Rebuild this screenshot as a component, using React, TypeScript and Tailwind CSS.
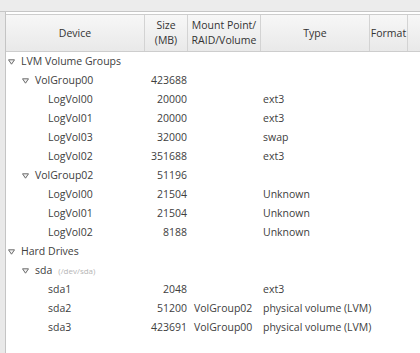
import React from "react";

type Row = {
  name: string;
  level: 0 | 1 | 2;
  expander?: boolean;
  hint?: string;
  size?: string;
  mount?: string;
  type?: string;
};

const rows: Row[] = [
  { name: "LVM Volume Groups", level: 0, expander: true },
  { name: "VolGroup00", level: 1, expander: true, size: "423688" },
  { name: "LogVol00", level: 2, size: "20000", type: "ext3" },
  { name: "LogVol01", level: 2, size: "20000", type: "ext3" },
  { name: "LogVol03", level: 2, size: "32000", type: "swap" },
  { name: "LogVol02", level: 2, size: "351688", type: "ext3" },
  { name: "VolGroup02", level: 1, expander: true, size: "51196" },
  { name: "LogVol00", level: 2, size: "21504", type: "Unknown" },
  { name: "LogVol01", level: 2, size: "21504", type: "Unknown" },
  { name: "LogVol02", level: 2, size: "8188", type: "Unknown" },
  { name: "Hard Drives", level: 0, expander: true },
  { name: "sda", level: 1, expander: true, hint: "(/dev/sda)" },
  { name: "sda1", level: 2, size: "2048", type: "ext3" },
  { name: "sda2", level: 2, size: "51200", mount: "VolGroup02", type: "physical volume (LVM)" },
  { name: "sda3", level: 2, size: "423691", mount: "VolGroup00", type: "physical volume (LVM)" },
];

const cols = "grid grid-cols-[139px_43px_73px_109px_38px_12px]";

function Expander() {
  return (
    <svg width="7" height="6" viewBox="0 0 7 6" className="shrink-0">
      <path d="M0.5 0.8 H6.5 L3.5 5.2 Z" fill="#f2f2f2" stroke="#6b6b6b" strokeWidth="1" strokeLinejoin="round" />
    </svg>
  );
}

function HeaderCell({ children, last }: { children?: React.ReactNode; last?: boolean }) {
  return (
    <div
      className={`flex items-center justify-center text-center leading-[15px] ${
        last ? "" : "border-r border-[#d3d3d3]"
      }`}
    >
      {children}
    </div>
  );
}

export default function App() {
  return (
    <div
      className="flex h-[353px] w-[420px] flex-col overflow-hidden bg-white text-[10.5px] text-[#404040]"
      style={{ fontFamily: '"Open Sans", "DejaVu Sans", sans-serif' }}
    >
      <div className="h-[12px] shrink-0 border-b border-[#c6c6c6] bg-[#ececec]" />
      <div className="flex min-h-0 flex-1">
        <div className="w-[6px] shrink-0 border-r border-[#c4c4c4] bg-[#e9e9e9]" />
        <div className="min-w-0 flex-1 pt-[2px]">
          <div
            className={`${cols} h-[38px] border-y border-[#cdcdcd] bg-gradient-to-b from-[#f7f7f7] to-[#e9e9e9] text-[#333]`}
          >
            <HeaderCell>Device</HeaderCell>
            <HeaderCell>
              Size
              <br />
              (MB)
            </HeaderCell>
            <HeaderCell>
              Mount Point/
              <br />
              RAID/Volume
            </HeaderCell>
            <HeaderCell>Type</HeaderCell>
            <HeaderCell>Format</HeaderCell>
            <HeaderCell last />
          </div>

          <div className="flex flex-col">
            {rows.map((r, i) => (
              <div key={i} className={`${cols} h-[19px] items-center`}>
                <div
                  className={`flex items-center gap-[6px] whitespace-nowrap ${
                    r.level === 0 ? "pl-[2px]" : r.level === 1 ? "pl-[16px]" : "pl-[42px]"
                  }`}
                >
                  {r.expander && <Expander />}
                  <span>{r.name}</span>
                  {r.hint && <span className="text-[8px] text-[#b5b5b5]">{r.hint}</span>}
                </div>
                <div className="pr-[1px] text-right">{r.size}</div>
                <div className="whitespace-nowrap pl-[6px]">{r.mount}</div>
                <div className="col-span-3 whitespace-nowrap pl-[2px]">{r.type}</div>
              </div>
            ))}
          </div>
        </div>
      </div>
    </div>
  );
}
